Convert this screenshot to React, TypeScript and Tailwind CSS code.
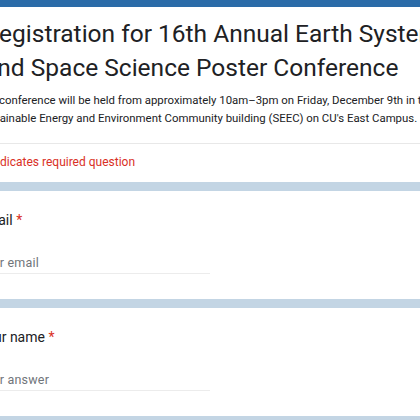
import React from "react";

function Question(props: {label: string; placeholder: string}) {
    return (
        <div className="bg-white pt-[19px] pb-[25px] pl-[16px]">
            <div className="pl-[2px] text-[14px] leading-[20px] text-[#202124]">
                {props.label} <span className="text-[#d93025]">*</span>
            </div>
            <div className="mt-[23px] pl-[2px] w-[234px] h-[21px] border-b border-[#ececec] text-[12.5px] leading-[20px] text-[#70757a] tracking-[0.2px]">
                {props.placeholder}
            </div>
        </div>
    );
}

export default function App() {
    return (
        <div className="w-[420px] h-[420px] overflow-hidden bg-[#c3d5e4]" style={{fontFamily: "Roboto, 'Liberation Sans', sans-serif"}}>
            <div className="w-[900px] -ml-[40px] flex flex-col gap-[9px]">
                <div className="bg-white">
                    <div className="h-[7px] bg-[#2b6ba8]"/>
                    <div className="pt-[10px] pl-[24px]">
                        <div className="text-[24.5px] leading-[34px] text-[#202124]">
                            Registration for 16th Annual Earth System<br/>and Space Science Poster Conference
                        </div>
                        <div className="mt-[6px] -ml-[7px] text-[11.4px] leading-[18px] text-[#202124]">
                            The conference will be held from approximately 10am–3pm on Friday, December 9th in the<br/>
                            Sustainable Energy and Environment Community building (SEEC) on CU's East Campus.
                        </div>
                    </div>
                    <div className="mt-[16px] h-px bg-[#e8e8e8]"/>
                    <div className="pt-[9px] pb-[11px] pl-[22px] text-[12px] leading-[18px] text-[#d93025]">
                        * Indicates required question
                    </div>
                </div>
                <Question label="Email" placeholder="Your email"/>
                <Question label="Your name" placeholder="Your answer"/>
                <div className="bg-white h-[40px]"/>
            </div>
        </div>
    );
}
